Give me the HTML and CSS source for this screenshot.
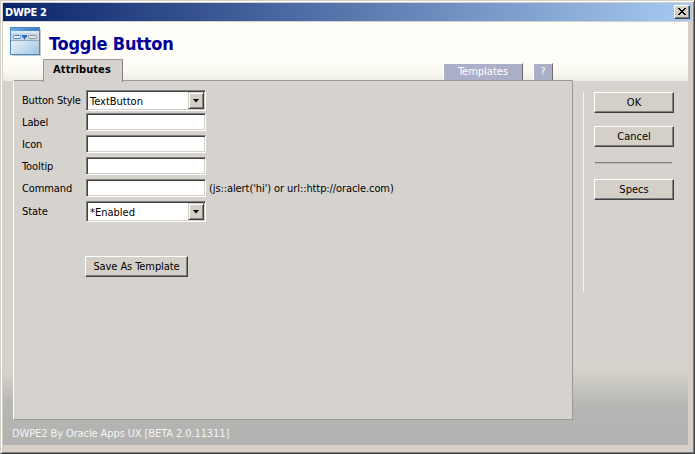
FILE: index.html
```html
<!DOCTYPE html>
<html lang="en">
<head>
<meta charset="utf-8">
<title>DWPE 2</title>
<link rel="stylesheet" href="styles.css">
</head>
<body>
<div class="window">
  <div class="titlebar">
    <span class="caption">DWPE 2</span>
    <button class="close" aria-label="Close"><svg width="8" height="7" viewBox="0 0 8 7" shape-rendering="crispEdges"><path d="M0 0h2v1h1v1h2v-1h1v-1h2v1h-1v1h-1v1h-1v1h1v1h1v1h1v1h-2v-1h-1v-1h-2v1h-1v1h-2v-1h1v-1h1v-1h1v-1h-1v-1h-1v-1h-1z"/></svg></button>
  </div>
  <div class="content">
    <header class="header">
      <div class="brand">
        <svg class="logo" width="32" height="30" viewBox="0 0 32 30">
          <defs>
            <linearGradient id="top" x2="1"><stop offset="0" stop-color="#6fa8dd"/><stop offset="1" stop-color="#3d7cc0"/></linearGradient>
            <linearGradient id="pane" x2="1" y2="1"><stop offset="0" stop-color="#f4fafd"/><stop offset=".45" stop-color="#d5e6f2"/><stop offset="1" stop-color="#9fc3e2"/></linearGradient>
          </defs>
          <path d="M2 2h29v27H2z" fill="#a9b4bd" opacity=".7"/>
          <rect x=".5" y=".5" width="29" height="27" fill="url(#pane)" stroke="#4d88c4"/>
          <path d="M1 1h28v3H1z" fill="url(#top)"/>
          <path d="M1 4h28v2H1z" fill="#d8eaf8"/>
          <path d="M1 6h28v8H1z" fill="#c9d7e5"/>
          <path d="M1 13h28v1H1z" fill="#92a9bf"/>
          <rect x="3.5" y="8.5" width="7" height="3" rx="1" fill="#eef6fd" stroke="#3c7cc2"/>
          <path d="M12 8h5v2h-1l-1.500 3-1.500-3h-1z" fill="#286bbb"/>
          <rect x="18.500" y="8.500" width="8" height="3" rx="1" fill="#e6e6e4" stroke="#8b929a"/>
        </svg>
        <h1>Toggle Button</h1>
      </div>
      <nav class="tabs">
        <span class="tab active">Attributes</span>
        <span class="tab link templates">Templates</span>
        <span class="tab link help">?</span>
      </nav>
    </header>
    <div class="body">
      <main class="panel">
        <div class="row tall"><label class="wide">Button Style</label><div class="field select"><span>TextButton</span><i class="drop"></i></div></div>
        <div class="row"><label>Label</label><div class="field"></div></div>
        <div class="row"><label>Icon</label><div class="field"></div></div>
        <div class="row"><label>Tooltip</label><div class="field"></div></div>
        <div class="row"><label>Command</label><div class="field"></div><span class="hint">(js::alert('hi') or url::http://oracle.com)</span></div>
        <div class="row tall"><label>State</label><div class="field select"><span>*Enabled</span><i class="drop"></i></div></div>
        <button class="button save">Save As Template</button>
      </main>
      <aside class="actions">
        <button class="button">OK</button>
        <button class="button">Cancel</button>
        <div class="rule"></div>
        <button class="button">Specs</button>
      </aside>
    </div>
    <footer>DWPE2 By Oracle Apps UX [BETA 2.0.11311]</footer>
  </div>
</div>
</body>
</html>
```
FILE: styles.css
```css
* { box-sizing: border-box; }
body {
  margin: 0;
  font: 11px/13px "DejaVu Sans Condensed", "DejaVu Sans", sans-serif;
  font-stretch: condensed;
  color: #000;
}
.window {
  width: 695px;
  height: 454px;
  padding: 1px 4px 6px 1px;
  background: #d4d0c8;
  border: 1px solid;
  border-color: #d4d0c8 #404040 #404040 #d4d0c8;
  box-shadow: inset 1px 1px #fff, inset -1px -1px #808080;
}
.titlebar {
  display: flex;
  align-items: center;
  justify-content: space-between;
  width: 689px;
  height: 18px;
  margin: 1px 0 1px 1px;
  padding: 0 2px;
  background: linear-gradient(90deg, #0a246a, #a6caf0);
}
.caption { color: #fff; font-weight: bold; letter-spacing: -.3px; }
.close, .button {
  font: inherit;
  color: #000;
  background: #d4d0c8;
  border: 1px solid;
  border-color: #fff #404040 #404040 #fff;
  box-shadow: inset -1px -1px #808080;
  padding: 0;
}
.close { display: grid; place-items: center; width: 16px; height: 14px; padding: 0 1px 1px 0; }
.content {
  display: flex;
  flex-direction: column;
  width: 685px;
  height: 423px;
  margin-left: 1px;
  background: linear-gradient(#d6d3ce 0 340px, #d5d2ca 350px, #c6c5c0 365px, #b6b6b4 382px, #b2b2b1);
}
.header {
  height: 59px;
  flex: none;
  background: linear-gradient(#fefdf8 0 40px, #f9f8f0 50px, #eeede6 58px);
}
.brand { display: flex; height: 37px; padding: 5px 0 0 7px; }
.logo { flex: none; }
h1 { margin: 7px 0 0 7px; font-size: 18px; line-height: 20px; color: #000099; letter-spacing: -.2px; white-space: nowrap; }
.tabs { display: flex; align-items: flex-end; height: 22px; padding-left: 40px; }
.tab { flex: none; text-align: center; border: 1px solid; }
.active {
  position: relative;
  z-index: 1;
  width: 80px;
  height: 23px;
  margin-bottom: -1px;
  padding: 3px 2px 0 0;
  background: #d6d3ce;
  border-color: #999 #808080 #d6d3ce #999;
  border-bottom: 0;
  font-weight: bold;
  letter-spacing: .1px;
}
.link { height: 18px; background: #abafc8; color: #fff; border-color: #fff #6b6b70 #abafc8 #fff; border-bottom: 0; padding-top: 1px; }
.templates { width: 80px; margin-left: 320px; }
.help { width: 20px; margin-left: 10px; }
.body { display: flex; height: 340px; margin-top: -1px; padding-left: 10px; }
.panel {
  width: 560px;
  height: 340px;
  padding: 9px 0 0 8px;
  background: #d6d3ce;
  border: 1px solid;
  border-color: #999 #999 #999 #fff;
}
.row { display: flex; align-items: center; height: 18px; margin-bottom: 4px; }
.row.tall { height: 21px; margin-bottom: 2px; }
.row label { width: 64px; flex: none; white-space: nowrap; letter-spacing: -.1px; }
.row .wide { letter-spacing: -.2px; }
.field {
  flex: none;
  width: 120px;
  height: 100%;
  background: #fff;
  border: 1px solid;
  border-color: #808080 #fff #fff #808080;
  box-shadow: inset 1px 1px #404040, inset -1px -1px #d4d0c8;
}
.select { display: flex; align-items: center; justify-content: space-between; padding: 1px 1px 1px 3px; }
.select span { padding-top: 2px; }
.drop {
  display: grid;
  place-items: center;
  width: 16px;
  height: 17px;
  background: #d4d0c8;
  border: 1px solid;
  border-color: #d4d0c8 #404040 #404040 #d4d0c8;
  box-shadow: inset 1px 1px #fff, inset -1px -1px #808080;
}
.drop::after { content: ""; width: 7px; height: 4px; background: #000; clip-path: polygon(0 0, 100% 0, 50% 100%); }
.hint { margin-left: 3px; white-space: nowrap; letter-spacing: -.09px; }
.button { display: block; height: 21px; text-align: center; white-space: nowrap; }
.save { width: 103px; margin: 34px 0 0 63px; letter-spacing: -.08px; }
.actions { width: 92px; height: 200px; margin: 12px 0 0 10px; padding-left: 10px; border-left: 1px solid #f4f3f0; }
.actions .button { width: 80px; margin-bottom: 13px; }
.rule { width: 77px; height: 2px; margin: 15px 0 15px 1px; border-top: 1px solid #808080; border-bottom: 1px solid #bbb; }
footer { padding: 7px 0 0 9px; color: #f4f4f4; white-space: nowrap; letter-spacing: -.1px; }
```
